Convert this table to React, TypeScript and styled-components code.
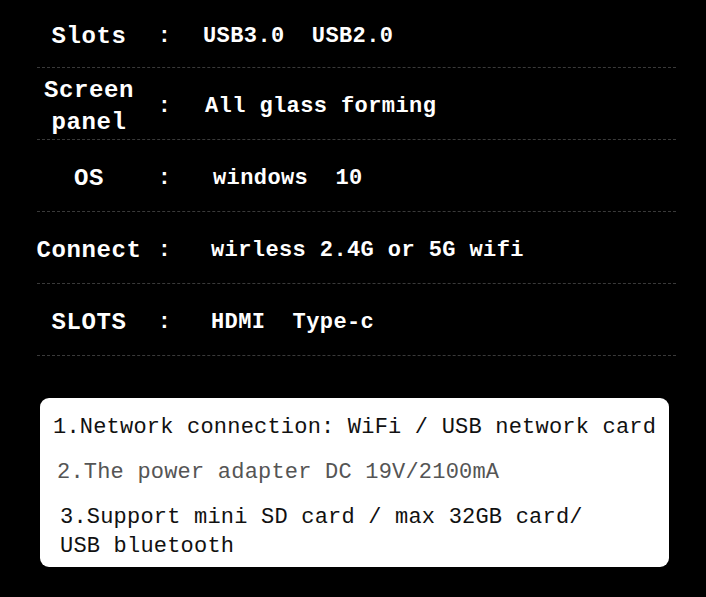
import React from 'react'
import styled, { createGlobalStyle } from 'styled-components'

const GlobalStyle = createGlobalStyle`
  html, body {
    margin: 0;
    padding: 0;
    background: #000;
  }
  body {
    width: 706px;
    height: 597px;
    overflow: hidden;
    font-family: "Liberation Mono", "DejaVu Sans Mono", monospace;
  }
`

const specs = [
  { label: ['Slots'], value: 'USB3.0  USB2.0', indent: 203, height: 68 },
  { label: ['Screen', 'panel'], value: 'All glass forming', indent: 205, height: 72 },
  { label: ['OS'], value: 'windows  10', indent: 213, height: 72 },
  { label: ['Connect'], value: 'wirless 2.4G or 5G wifi', indent: 211, height: 72 },
  { label: ['SLOTS'], value: 'HDMI  Type-c', indent: 211, height: 72 },
]

const notes = [
  { lines: ['1.Network connection: WiFi / USB network card'], muted: false, indent: 13 },
  { lines: ['2.The power adapter DC 19V/2100mA'], muted: true, indent: 17 },
  { lines: ['3.Support mini SD card / max 32GB card/', 'USB bluetooth'], muted: false, indent: 20 },
]

const App = () => {
  return (
    <Page>
      <GlobalStyle />
      <Table>
        {specs.map((s, i) => (
          <Row key={i} $height={s.height}>
            <Label>
              {s.label.map((l) => (
                <span key={l}>{l}</span>
              ))}
            </Label>
            <Colon>:</Colon>
            <Value $indent={s.indent - 175}>{s.value}</Value>
          </Row>
        ))}
      </Table>
      <NoteBox>
        {notes.map((n, i) => (
          <Note key={i} $muted={n.muted} $indent={n.indent}>
            {n.lines.map((l) => (
              <span key={l}>{l}</span>
            ))}
          </Note>
        ))}
      </NoteBox>
    </Page>
  )
}

export default App

const Page = styled.div`
  width: 706px;
  height: 597px;
  background: #000;
  display: flex;
  flex-direction: column;
`

const Table = styled.div`
  margin: 0 30px 0 37px;
  display: flex;
  flex-direction: column;
`

const Row = styled.div<{ $height: number }>`
  height: ${(p) => p.$height}px;
  box-sizing: border-box;
  display: grid;
  grid-template-columns: 104px 34px 1fr;
  align-items: center;
  padding-top: 6px;
  border-bottom: 1px dashed #3a3a3a;
  color: #fff;
`

const Label = styled.div`
  display: flex;
  flex-direction: column;
  align-items: center;
  font-size: 24px;
  letter-spacing: 0.6px;
  font-weight: bold;
  line-height: 32px;
`

const Colon = styled.div`
  font-size: 22px;
  font-weight: bold;
  text-align: right;
  padding-right: 4px;
`

const Value = styled.div<{ $indent: number }>`
  padding-left: ${(p) => p.$indent}px;
  font-size: 22px;
  letter-spacing: 0.4px;
  font-weight: bold;
  white-space: pre;
`

const NoteBox = styled.div`
  margin: 42px 37px 0 40px;
  height: 169px;
  box-sizing: border-box;
  background: #fff;
  border-radius: 9px;
  padding: 15px 0 0 0;
  display: flex;
  flex-direction: column;
  gap: 16px;
`

const Note = styled.div<{ $muted: boolean; $indent: number }>`
  display: flex;
  flex-direction: column;
  padding-left: ${(p) => p.$indent}px;
  color: ${(p) => (p.$muted ? '#555' : '#111')};
  font-size: 22px;
  letter-spacing: 0.2px;
  line-height: 29px;
  white-space: pre;
`
